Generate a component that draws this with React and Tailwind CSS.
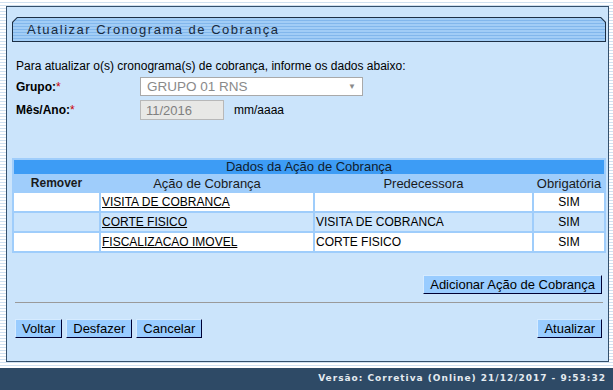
import React from 'react';

const stripes = 'bg-[repeating-linear-gradient(to_bottom,#ffffff_0px,#ffffff_2px,#cfe0f0_2px,#cfe0f0_3px)]';
const btn =
  'h-[19px] px-[6px] bg-[#99ccff] text-[13px] leading-none text-black border border-t-[#d6ebff] border-l-[#d6ebff] border-r-[#000033] border-b-[#000033]';

const acoes = [
  { acao: 'VISITA DE COBRANCA', pred: '', obrig: 'SIM' },
  { acao: 'CORTE FISICO', pred: 'VISITA DE COBRANCA', obrig: 'SIM' },
  { acao: 'FISCALIZACAO IMOVEL', pred: 'CORTE FISICO', obrig: 'SIM' },
];

const App = () => {
  return (
    <div
      className={`w-[613px] h-[390px] flex flex-col overflow-hidden ${stripes}`}
      style={{ fontFamily: '"Liberation Sans", Arial, sans-serif' }}
    >
      <div className="pt-[6px] pl-[6px] pr-[4px]">
        {/* painel principal */}
        <div className="h-[356px] border border-[#34506c] bg-[#cbe4fb] pl-[5px] pr-[2px] pt-[10px] flex flex-col">
          {/* barra de titulo */}
          <div className="h-[25px] bg-[#1c2f45] p-[1px] [clip-path:polygon(5px_0,calc(100%-5px)_0,100%_5px,100%_100%,0_100%,0_5px)]">
            <div className="h-full flex items-center pl-[14px] bg-[repeating-linear-gradient(to_bottom,#a2cdf6_0px,#a2cdf6_2px,#82b7ec_2px,#82b7ec_3px)] [clip-path:polygon(4.5px_0,calc(100%-4.5px)_0,100%_4.5px,100%_100%,0_100%,0_4.5px)]">
              <span className="text-[13px] tracking-[1.5px] text-[#1a2a3c]">Atualizar Cronograma de Cobrança</span>
            </div>
          </div>

          <div className="pl-[4px] mt-[17px] text-[12px] leading-[14px] text-black">
            Para atualizar o(s) cronograma(s) de cobrança, informe os dados abaixo:
          </div>

          <div className="pl-[4px] mt-[4px] flex items-center h-[19px]">
            <div className="w-[124px] text-[12px] font-bold">
              Grupo:<span className="text-[#cc0000] font-normal">*</span>
            </div>
            <div className="w-[223px] h-[19px] bg-white border border-[#a9a9a9] flex items-center justify-between pl-[6px] pr-[6px]">
              <span className="text-[13.5px] text-[#8a8a8a] leading-none">GRUPO 01 RNS</span>
              <span className="text-[8px] text-[#8a8a8a]">▼</span>
            </div>
          </div>

          <div className="pl-[4px] mt-[4px] flex items-center h-[20px]">
            <div className="w-[124px] text-[12px] font-bold">
              Mês/Ano:<span className="text-[#cc0000] font-normal">*</span>
            </div>
            <div className="w-[84px] h-[20px] bg-[#e8e8e6] border border-[#b8b8b8] flex items-center pl-[5px]">
              <span className="text-[13px] text-[#808080] leading-none">11/2016</span>
            </div>
            <span className="ml-[10px] text-[12px]">mm/aaaa</span>
          </div>

          {/* tabela de acoes */}
          <table className="mt-[38px] w-[594px] bg-[#9fcdfb] border-separate border-spacing-[2px] text-[12px] leading-[14px]">
            <thead>
              <tr>
                <th colSpan={4} className="bg-[#3d9cf5] font-normal h-[14px] p-0 text-[13px] leading-[14px] text-[#10202e]">
                  Dados da Ação de Cobrança
                </th>
              </tr>
              <tr className="h-[15px]">
                <th className="w-[85px] font-bold p-0 text-[12px] leading-[15px] text-[#1a1a1a]">Remover</th>
                <th className="w-[212px] font-normal p-0 text-[13px] leading-[15px] text-[#1a1a1a]">Ação de Cobrança</th>
                <th className="w-[217px] font-normal p-0 text-[13px] leading-[15px] text-[#1a1a1a]">Predecessora</th>
                <th className="font-normal p-0 text-[13px] leading-[15px] text-[#1a1a1a]">Obrigatória</th>
              </tr>
            </thead>
            <tbody>
              {acoes.map((a, i) => (
                <tr key={a.acao} className={`h-[18px] ${i % 2 === 1 ? 'bg-[#cce5fc]' : 'bg-white'}`}>
                  <td className="p-0"></td>
                  <td className="p-0 pl-[1px]">
                    <span className="underline text-black">{a.acao}</span>
                  </td>
                  <td className="p-0 pl-[1px]">{a.pred}</td>
                  <td className="p-0 text-center">{a.obrig}</td>
                </tr>
              ))}
            </tbody>
          </table>

          <div className="flex justify-end mt-[22px] pr-[4px]">
            <button className={btn}>Adicionar Ação de Cobrança</button>
          </div>

          <div className="mx-[3px] mt-[8px] h-[1px] bg-[#9a9a9a]" />

          <div className="flex items-center mt-[13px] pl-[3px] pr-[4px]">
            <div className="flex gap-[4px]">
              <button className={btn}>Voltar</button>
              <button className={btn}>Desfazer</button>
              <button className={btn}>Cancelar</button>
            </div>
            <div className="ml-auto">
              <button className={btn}>Atualizar</button>
            </div>
          </div>
        </div>
      </div>

      <div className="mt-auto h-[22px] bg-[#2e4a66] flex items-center justify-end pr-[7px]">
        <span
          className="text-[9px] font-bold tracking-[1px] text-[#e4eaf0]"
          style={{ fontFamily: '"DejaVu Sans", Verdana, sans-serif' }}
        >
          Versão: Corretiva (Online) 21/12/2017 - 9:53:32
        </span>
      </div>
    </div>
  );
};

export default App;
